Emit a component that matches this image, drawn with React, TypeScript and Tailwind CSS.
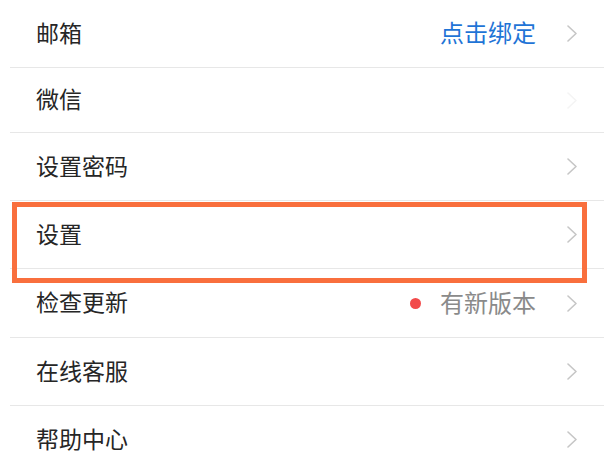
import React from 'react';

type Row = {
  label: string;
  h: string;
  value?: React.ReactNode;
  arrow?: boolean;
  highlight?: boolean;
};

function Chevron({ faint = false }: { faint?: boolean }) {
  return (
    <svg width="12" height="17" viewBox="0 0 12 17" className="shrink-0">
      <polyline
        points="2,1 10,8.5 2,16"
        fill="none"
        stroke={faint ? '#f4f4f4' : '#c6c6c6'}
        strokeWidth="1.6"
        strokeLinecap="round"
        strokeLinejoin="round"
      />
    </svg>
  );
}

const rows: Row[] = [
  {
    label: '邮箱',
    h: 'h-[68px]',
    value: <span className="text-[#1f74d6] text-[24px] leading-none mb-[3px]">点击绑定</span>,
    arrow: true,
  },
  { label: '微信', h: 'h-[65px]' },
  { label: '设置密码', h: 'h-[68px]', arrow: true },
  { label: '设置', h: 'h-[68px]', arrow: true, highlight: true },
  {
    label: '检查更新',
    h: 'h-[69px]',
    value: (
      <span className="flex items-center gap-[19px]">
        <span className="w-[11px] h-[11px] rounded-full bg-[#f24a4a]" />
        <span className="text-[#8a8a8a] text-[24px] leading-none mb-[3px]">有新版本</span>
      </span>
    ),
    arrow: true,
  },
  { label: '在线客服', h: 'h-[68px]', arrow: true },
  { label: '帮助中心', h: 'h-[68px]', arrow: true },
];

export default function App() {
  return (
    <div
      className="w-[604px] h-[466px] overflow-hidden bg-white"
      style={{ fontFamily: '"Noto Sans CJK SC", "Noto Sans", sans-serif' }}
    >
      {rows.map((r) => (
        <div
          key={r.label}
          className={`relative ml-[10px] ${r.h} flex items-center border-b border-[#e7e7e7] pl-[26px] pr-[26px]`}
        >
          <span className="text-[23px] text-[#262626] leading-none mb-[3px]">{r.label}</span>
          <div className="ml-auto flex items-center gap-[30px]">
            {r.value}
            {r.arrow ? <Chevron /> : <Chevron faint />}
          </div>
          {r.highlight && (
            <div className="absolute left-[2px] top-[1px] w-[575px] h-[81px] border-[5px] border-[#f96f3d] pointer-events-none" />
          )}
        </div>
      ))}
    </div>
  );
}
